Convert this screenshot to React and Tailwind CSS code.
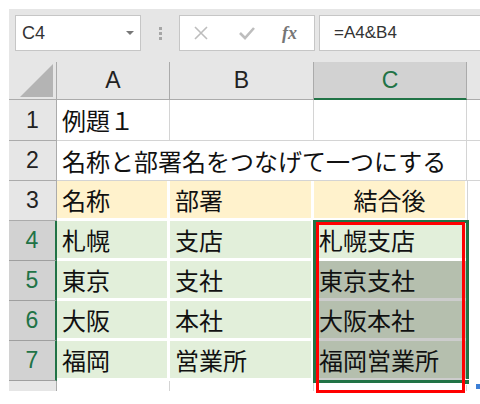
import React from "react";

const jp = "font-['Noto_Sans_CJK_JP','Noto_Sans_CJK_SC',sans-serif]";
const ui = "font-['Liberation_Sans',Arial,sans-serif]";

const rows = [
  { n: 1, h: "h-[41px]", kind: "plain", a: "例題１", b: "", c: "" },
  { n: 2, h: "h-[40px]", kind: "overflow", a: "名称と部署名をつなげて一つにする", b: "", c: "" },
  { n: 3, h: "h-[40px]", kind: "head", a: "名称", b: "部署", c: "結合後" },
  { n: 4, h: "h-[40px]", kind: "data", a: "札幌", b: "支店", c: "札幌支店", active: true },
  { n: 5, h: "h-[40px]", kind: "data", a: "東京", b: "支社", c: "東京支社" },
  { n: 6, h: "h-[40px]", kind: "data", a: "大阪", b: "本社", c: "大阪本社" },
  { n: 7, h: "h-[40px]", kind: "data", a: "福岡", b: "営業所", c: "福岡営業所" },
];

const RowHead = ({ n, selected }) => (
  <div
    className={`w-[48px] shrink-0 h-full flex items-center justify-center border-b text-[23px] ${ui} ${
      selected
        ? "bg-[#d2d2d2] text-[#217346] border-r-2 border-r-[#217346] border-b-[#9f9f9f]"
        : "bg-[#e6e6e6] text-[#222] border-r border-r-[#ababab] border-b-[#ababab]"
    }`}
  >
    {n}
  </div>
);

const Cell = ({ w, bg, border, children, center, noRight }) => (
  <div
    className={`${w} h-full shrink-0 flex items-center ${center ? "justify-center" : "pl-[5px]"} ${bg} ${border} ${
      noRight ? "border-b" : "border-r border-b"
    } whitespace-nowrap text-[24px] text-[#111] ${jp} leading-none`}
  >
    {children}
  </div>
);

function Row({ r }) {
  if (r.kind === "plain" || r.kind === "overflow") {
    const over = r.kind === "overflow";
    return (
      <div className={`flex ${r.h}`}>
        <RowHead n={r.n} />
        <Cell w="w-[113px]" bg="bg-white" border="border-[#d4d4d4]" noRight={over}>
          <span className="relative z-10">{r.a}</span>
        </Cell>
        <Cell w="w-[144px]" bg="bg-white" border="border-[#d4d4d4]" noRight={over} />
        <Cell w="w-[153px]" bg="bg-white" border="border-[#d4d4d4]" />
        <div className="flex-1 h-full bg-white border-b border-[#d4d4d4]" />
      </div>
    );
  }
  if (r.kind === "head") {
    return (
      <div className={`flex ${r.h}`}>
        <RowHead n={r.n} />
        <Cell w="w-[113px]" bg="bg-[#fff2cc]" border="border-white border-r-[3px] border-b-[3px]">
          {r.a}
        </Cell>
        <Cell w="w-[144px]" bg="bg-[#fff2cc]" border="border-white border-r-[3px] border-b-[3px]">
          {r.b}
        </Cell>
        <Cell w="w-[153px]" bg="bg-[#fff2cc]" border="border-white border-r-[2px] border-b-[3px]" center>
          {r.c}
        </Cell>
        <div className="flex-1 h-full bg-white border-l border-l-[#d4d4d4]" />
      </div>
    );
  }
  return (
    <div className={`flex ${r.h}`}>
      <RowHead n={r.n} selected />
      <Cell w="w-[113px]" bg="bg-[#e2efda]" border="border-white border-r-[3px] border-b-[3px]">
        {r.a}
      </Cell>
      <Cell w="w-[144px]" bg="bg-[#e2efda]" border="border-white border-r-[3px] border-b-[3px]">
        {r.b}
      </Cell>
      <Cell
        w="w-[153px]"
        bg={r.active ? "bg-[#e2efda]" : "bg-[#b5bfae]"}
        border={r.active ? "border-white border-b-[3px]" : "border-[#cccccc] border-b-[3px]"}
        noRight
      >
        {r.c}
      </Cell>
      <div className="flex-1 h-full bg-white" />
    </div>
  );
}

export default function App() {
  return (
    <div className="relative w-[480px] h-[404px] bg-white overflow-hidden">
      <div className="ml-[9px] mt-[9px] w-[471px] h-[382px] bg-[#e6e6e6] flex flex-col overflow-hidden">
        {/* formula bar */}
        <div className="h-[53px] shrink-0 flex items-start pt-[6px] pl-[6px]">
          <div className={`w-[126px] h-[36px] shrink-0 bg-white border border-[#c6c6c6] flex items-center justify-between pl-[6px] pr-[6px] ${ui}`}>
            <span className="text-[18px] text-[#333]">C4</span>
            <span className="w-0 h-0 border-l-[4px] border-r-[4px] border-t-[4px] border-l-transparent border-r-transparent border-t-[#777]" />
          </div>
          <div className="w-[38px] h-[36px] shrink-0 flex flex-col items-center justify-center gap-[2px]">
            <span className="w-[3px] h-[3px] bg-[#a6a6a6]" />
            <span className="w-[3px] h-[3px] bg-[#a6a6a6]" />
            <span className="w-[3px] h-[3px] bg-[#a6a6a6]" />
          </div>
          <div className="w-[136px] h-[36px] shrink-0 bg-white border border-[#c6c6c6] flex items-center">
            <svg width="16" height="16" viewBox="0 0 16 16" className="ml-[13px]">
              <path d="M2 2 L14 14 M14 2 L2 14" stroke="#bdbdbd" strokeWidth="1.6" fill="none" />
            </svg>
            <svg width="18" height="16" viewBox="0 0 18 16" className="ml-[29px]">
              <path d="M2 8 L7 13 L16 3" stroke="#bdbdbd" strokeWidth="2.6" fill="none" />
            </svg>
            <span className="ml-[26px] text-[18px] italic font-bold text-[#767676] font-['Liberation_Serif',serif] leading-none">
              fx
            </span>
          </div>
          <div className={`ml-[4px] w-[200px] h-[36px] shrink-0 bg-white border border-[#c6c6c6] flex items-center pl-[14px] text-[17px] text-[#333] ${ui}`}>
            =A4&amp;B4
          </div>
        </div>

        {/* column headers */}
        <div className={`h-[38px] shrink-0 flex text-[23px] ${ui}`}>
          <div className="w-[48px] shrink-0 h-full border-r border-b border-[#ababab] flex items-end justify-end pr-[3px] pb-[2px]">
            <svg width="33" height="33" viewBox="0 0 33 33">
              <polygon points="33,0 33,33 0,33" fill="#b4b4b4" />
            </svg>
          </div>
          <div className="w-[113px] shrink-0 h-full border-r border-b border-[#ababab] flex items-center justify-center text-[#222]">A</div>
          <div className="w-[144px] shrink-0 h-full border-r border-b border-[#ababab] flex items-center justify-center text-[#222]">B</div>
          <div className="w-[153px] shrink-0 h-full border-r border-r-[#ababab] border-b-2 border-b-[#217346] bg-[#d2d2d2] flex items-center justify-center text-[#217346]">C</div>
          <div className="flex-1 h-full border-b border-[#ababab]" />
        </div>

        {rows.map((r) => (
          <Row key={r.n} r={r} />
        ))}

        {/* row 8, cut off */}
        <div className="flex h-[10px]">
          <div className="w-[48px] shrink-0 h-full bg-[#e6e6e6] border-r border-[#ababab]" />
          <div className="w-[113px] shrink-0 h-full bg-white border-r border-[#d4d4d4]" />
          <div className="w-[144px] shrink-0 h-full bg-white border-r border-[#d4d4d4]" />
          <div className="w-[153px] shrink-0 h-full bg-white border-r border-[#d4d4d4]" />
          <div className="flex-1 h-full bg-white" />
        </div>
      </div>

      {/* selection C4:C7 */}
      <div className="absolute left-[313px] top-[220px] w-[156px] h-[163px] border-[3px] border-[#217346] pointer-events-none" />
      <div className="absolute left-[464px] top-[379px] w-[6px] h-[6px] bg-[#217346] border border-white" />
      {/* red annotation box */}
      <div className="absolute left-[316px] top-[222px] w-[149px] h-[171px] border-[3px] border-[#ff0000] pointer-events-none" />
      <div className="absolute left-[476px] top-[384px] w-[4px] h-[5px] bg-[#3c7fd6]" />
    </div>
  );
}
